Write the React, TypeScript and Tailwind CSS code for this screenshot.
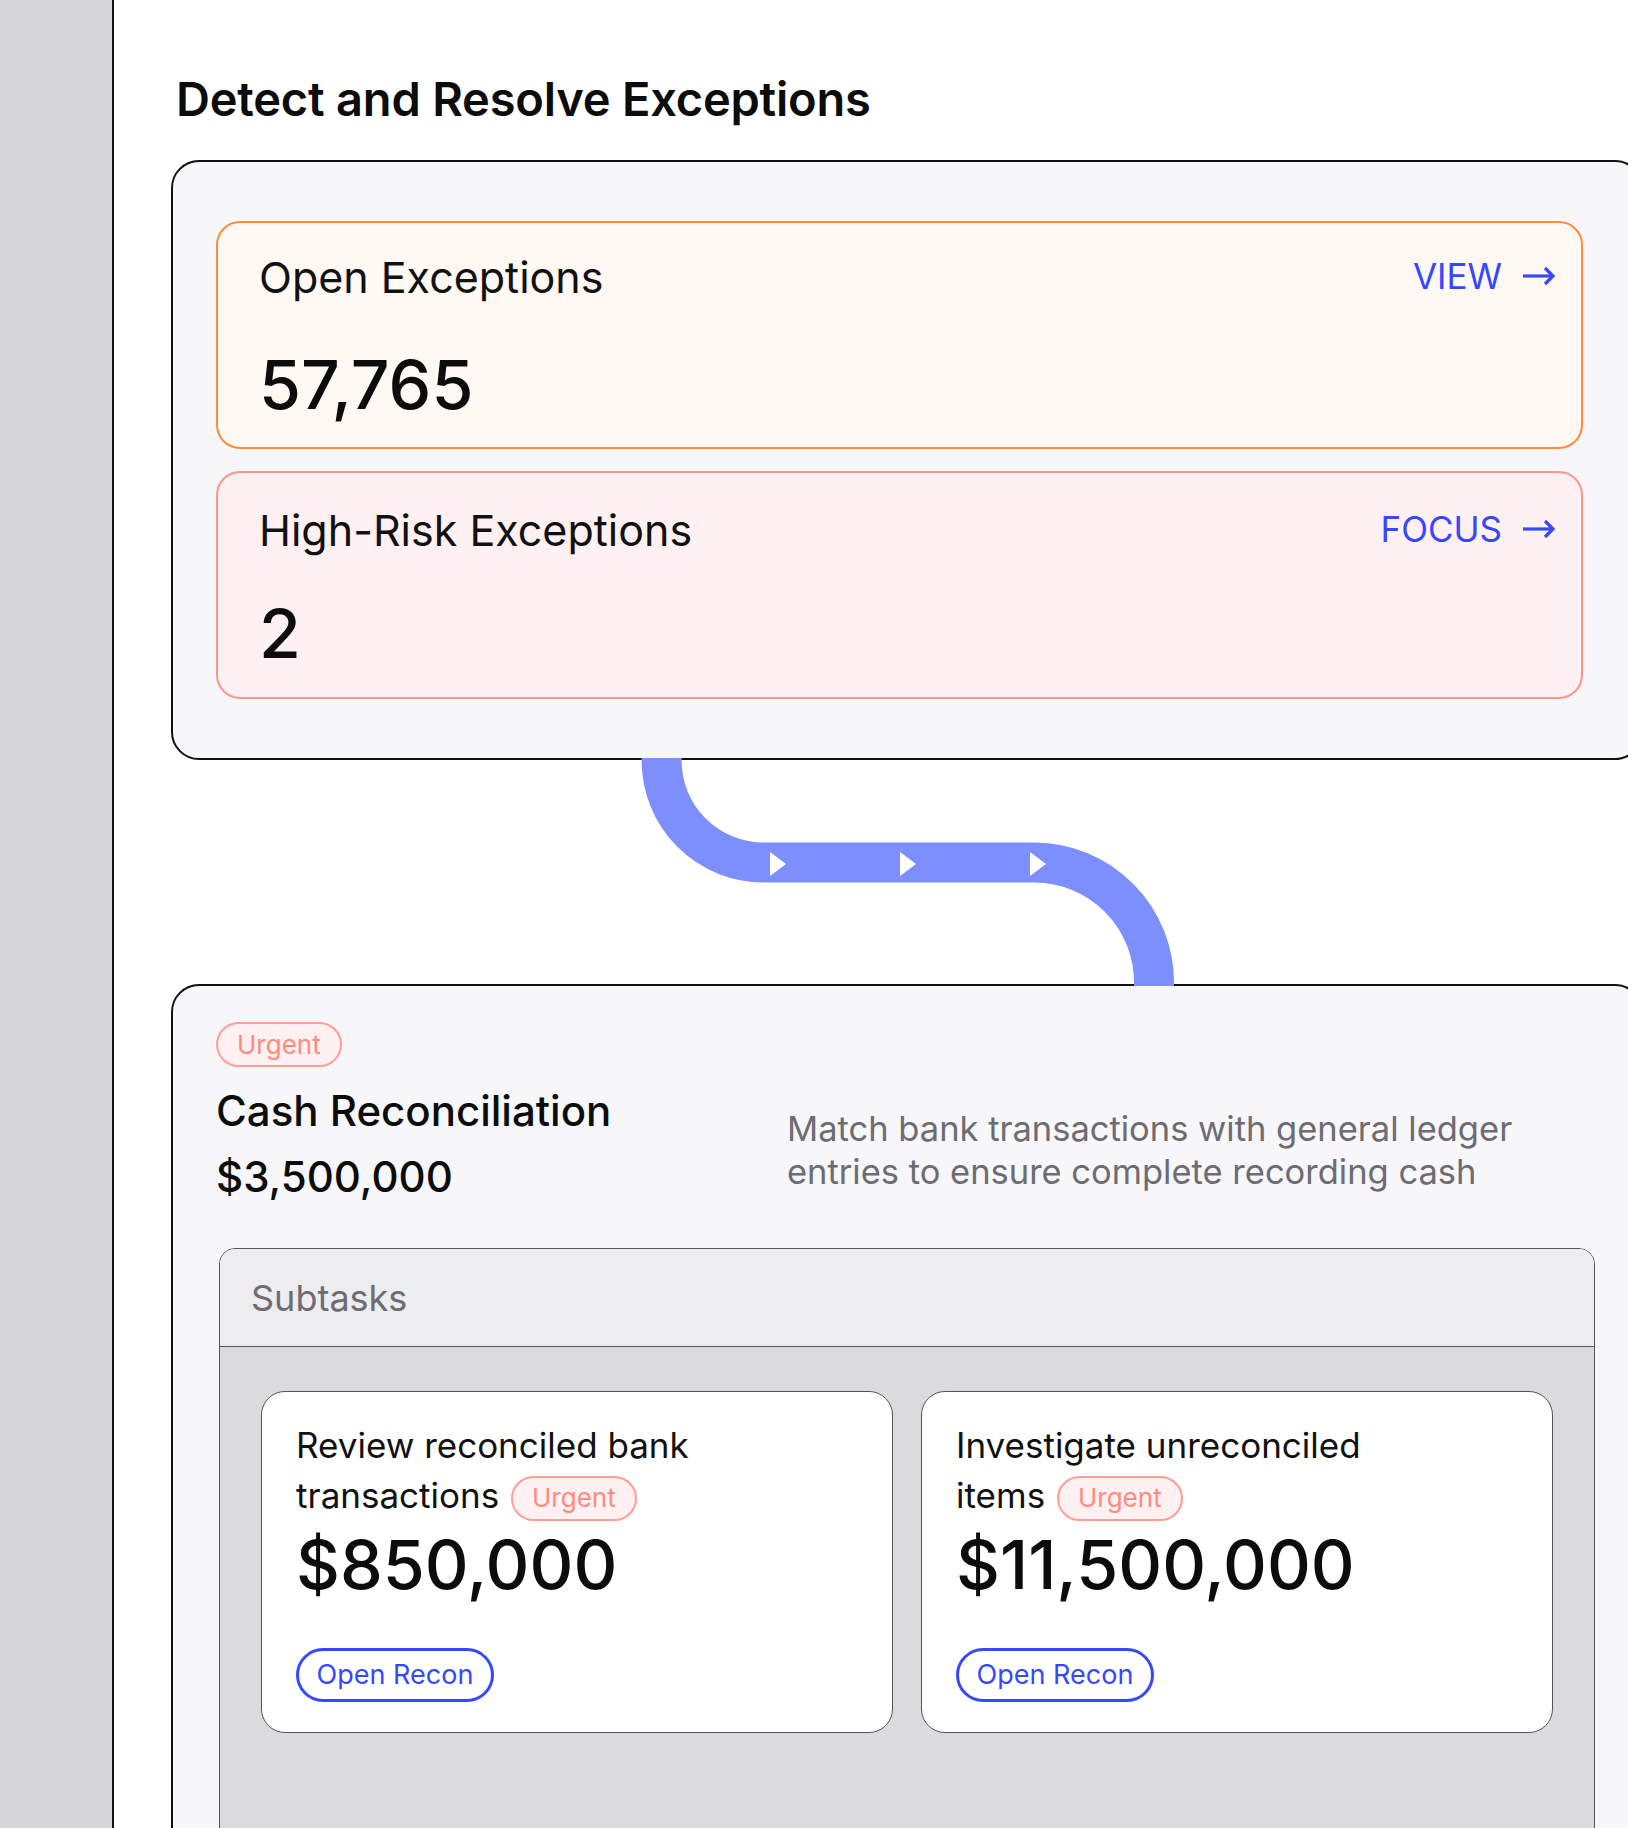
import { ReactNode } from "react";

const font = "font-['Inter','Noto_Sans',sans-serif]";

function Arrow() {
  return (
    <svg width="34" height="20" viewBox="0 0 34 20" fill="none" className="shrink-0">
      <path d="M1 10H31" stroke="#3548ff" strokeWidth="3.2" />
      <path d="M23 2L31 10L23 18" stroke="#3548ff" strokeWidth="3.2" strokeLinejoin="miter" />
    </svg>
  );
}

function Badge({ className = "" }: { className?: string }) {
  return (
    <span
      className={`inline-flex h-[45px] items-center rounded-full border-2 border-[#ff9e94] bg-[#fff0f1] px-[19px] text-[26px] leading-none text-[#ff8b7f] ${className}`}
    >
      Urgent
    </span>
  );
}

function StatCard({
  title,
  value,
  action,
  tone,
  pt,
  gap,
}: {
  title: string;
  value: string;
  action: string;
  tone: "orange" | "pink";
  pt: string;
  gap: string;
}) {
  const toneCls =
    tone === "orange"
      ? "border-[#fb8d3d] bg-[#fff8f3]"
      : "border-[#fc968d] bg-[#fff0f2]";
  return (
    <div className={`h-[228px] w-[1367px] rounded-[24px] border-2 pl-[41px] pr-[25px] ${toneCls} ${pt}`}>
      <div className="flex items-start justify-between">
        <p className="text-[43px] leading-[52px] text-[#111]">{title}</p>
        <button type="button" className="mt-[4px] flex items-center gap-[20px] text-[35px] leading-[42px] text-[#3548ff]">
          {action}
          <Arrow />
        </button>
      </div>
      <p className={`text-[68px] font-medium leading-none text-[#0c0c0c] ${gap}`}>{value}</p>
    </div>
  );
}

function SubtaskCard({ children, amount }: { children: ReactNode; amount: string }) {
  return (
    <div className="h-[342px] rounded-[24px] border-[1.5px] border-[#555] bg-white pl-[34px] pt-[28px]">
      <p className="w-[450px] text-[35px] leading-[50px] text-[#111]">{children}</p>
      <p className="mt-[9px] text-[68px] font-medium leading-none text-[#0c0c0c]">{amount}</p>
      <button
        type="button"
        className="mt-[50px] flex h-[54px] w-[198px] items-center justify-center rounded-full border-[3px] border-[#3548ff] text-[27px] text-[#3548ff]"
      >
        Open Recon
      </button>
    </div>
  );
}

function Connector() {
  return (
    <svg width="1300" height="224" viewBox="0 0 1300 224" className="relative z-10 block overflow-visible">
      <path
        d="M490.6 -2 L490.6 0.5 A102 102 0 0 0 592.6 102.5 H864 A120 120 0 0 1 983 222.5 V226"
        stroke="#7d8eff"
        strokeWidth="40"
        fill="none"
      />
      <path d="M599 92L615 104L599 116Z" fill="white" />
      <path d="M729 92L745 104L729 116Z" fill="white" />
      <path d="M859 92L875 104L859 116Z" fill="white" />
    </svg>
  );
}

export default function App() {
  return (
    <div className={`flex h-[1828px] w-[1628px] overflow-hidden bg-white ${font}`}>
      <aside className="h-full w-[114px] shrink-0 border-r-2 border-[#111] bg-[#d7d6da]" />

      <main className="shrink-0 pl-[57px] pt-[71px]">
        <h1 className="pl-[5px] text-[47px] font-semibold leading-[56px] tracking-[-0.2px] text-[#0c0c0c]">
          Detect and Resolve Exceptions
        </h1>

        <section className="mt-[33px] w-[1472px] rounded-[28px] border-2 border-[#111] bg-[#f7f6f9] pb-[59px] pl-[43px] pt-[59px]">
          <div className="flex flex-col gap-[22px]">
            <StatCard title="Open Exceptions" value="57,765" action="VIEW" tone="orange" pt="pt-[28px]" gap="mt-[47px]" />
            <StatCard title="High-Risk Exceptions" value="2" action="FOCUS" tone="pink" pt="pt-[31px]" gap="mt-[43px]" />
          </div>
        </section>

        <Connector />

        <section className="h-[900px] w-[1472px] rounded-[28px] border-2 border-[#111] bg-[#f7f6f9] pl-[43px] pt-[36px]">
          <div className="flex">
            <div className="w-[571px] shrink-0">
              <Badge />
              <h2 className="mt-[19px] text-[42px] font-medium leading-[50px] text-[#0c0c0c]">Cash Reconciliation</h2>
              <p className="mt-[16px] text-[42px] font-medium leading-[50px] text-[#0c0c0c]">$3,500,000</p>
            </div>
            <p className="mt-[85px] w-[760px] text-[34.5px] leading-[43px] text-[#6d6c72]">
              Match bank transactions with general ledger entries to ensure complete recording cash
            </p>
          </div>

          <div className="ml-[3px] mt-[46px] w-[1376px] overflow-hidden rounded-[16px] border-[1.5px] border-[#555]">
            <div className="flex h-[98px] items-center border-b-[1.5px] border-[#555] bg-[#ededf0] pl-[31px]">
              <span className="text-[36px] text-[#6d6c72]">Subtasks</span>
            </div>
            <div className="grid grid-cols-2 gap-[28px] bg-[#dbdadd] px-[41px] pb-[120px] pt-[44px]">
              <SubtaskCard amount="$850,000">
                Review reconciled bank transactions <Badge className="ml-[2px] align-middle" />
              </SubtaskCard>
              <SubtaskCard amount="$11,500,000">
                Investigate unreconciled items <Badge className="ml-[2px] align-middle" />
              </SubtaskCard>
            </div>
          </div>
        </section>
      </main>
    </div>
  );
}
